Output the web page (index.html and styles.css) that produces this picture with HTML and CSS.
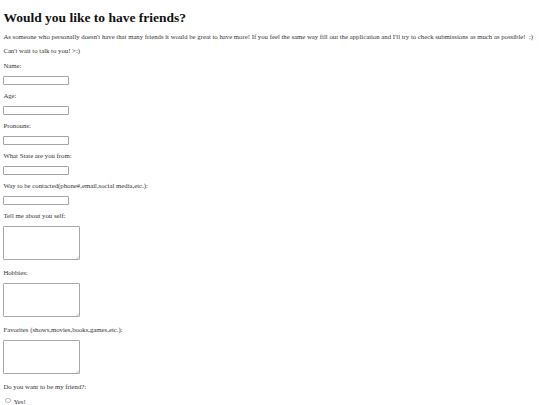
FILE: index.html
```html
<!DOCTYPE html>
<html lang="en">
<head>
<meta charset="utf-8">
<title>Would you like to have friends?</title>
<link rel="stylesheet" href="styles.css">
</head>
<body class="page">
<h1 class="title">Would you like to have friends?</h1>
<p class="text">As someone who personally doesn't have that many friends it would be great to have more! If you feel the same way fill out the application and I'll try to check submissions as much as possible! &nbsp;:)</p>
<p class="text">Can't wait to talk to you! &gt;:)</p>
<form class="form">
  <p class="text"><label for="name">Name:</label></p>
  <input class="field" type="text" id="name">
  <p class="text"><label for="age">Age:</label></p>
  <input class="field" type="text" id="age">
  <p class="text"><label for="pronouns">Pronouns:</label></p>
  <input class="field" type="text" id="pronouns">
  <p class="text"><label for="state">What State are you from:</label></p>
  <input class="field" type="text" id="state">
  <p class="text"><label for="contact">Way to be contacted(phone#,email,social media,etc.):</label></p>
  <input class="field" type="text" id="contact">
  <p class="text"><label for="about">Tell me about you self:</label></p>
  <div class="area-wrap"><textarea class="area" id="about"></textarea><svg class="grip" width="3" height="3" viewBox="0 0 3 3"><path d="M0.3 2.9 L2.9 0.3 M1.6 2.9 L2.9 1.6" stroke="#9a9a9a" stroke-width="0.45" fill="none"/></svg></div>
  <p class="text"><label for="hobbies">Hobbies:</label></p>
  <div class="area-wrap"><textarea class="area" id="hobbies"></textarea><svg class="grip" width="3" height="3" viewBox="0 0 3 3"><path d="M0.3 2.9 L2.9 0.3 M1.6 2.9 L2.9 1.6" stroke="#9a9a9a" stroke-width="0.45" fill="none"/></svg></div>
  <p class="text"><label for="favorites">Favorites (shows,movies,books,games,etc.):</label></p>
  <div class="area-wrap"><textarea class="area" id="favorites"></textarea><svg class="grip" width="3" height="3" viewBox="0 0 3 3"><path d="M0.3 2.9 L2.9 0.3 M1.6 2.9 L2.9 1.6" stroke="#9a9a9a" stroke-width="0.45" fill="none"/></svg></div>
  <p class="text">Do you want to be my friend?:</p>
  <div class="choice"><input class="radio" type="radio" id="yes" name="friend"> <label for="yes">Yes!</label></div>
</form>
</body>
</html>
```
FILE: styles.css
```css
.page {
  margin: 3.375px;
  font-family: "Liberation Serif", "Times New Roman", serif;
  font-size: 6.75px;
  line-height: 7.5px;
  color: #333;
  background: #fff;
}
.title {
  font-size: 13.5px;
  line-height: 15.5px;
  font-weight: bold;
  color: #111;
  margin: 7px 0;
}
.text {
  margin: 7px 0 6.5px;
  line-height: 7.5px;
}
.form {
  margin: 0;
}
.field {
  display: block;
  box-sizing: border-box;
  width: 66px;
  height: 9px;
  margin: 0;
  padding: 0;
  border: 1px solid #a4a4a4;
  border-radius: 1px;
  background: #fff;
  -webkit-appearance: none;
  appearance: none;
}
.area-wrap {
  position: relative;
  width: 76.4px;
  height: 34.4px;
  padding-bottom: 1.5px;
}
.area {
  display: block;
  box-sizing: border-box;
  width: 100%;
  height: 100%;
  margin: 0;
  padding: 0;
  border: 1px solid #a8a8a8;
  border-radius: 1px;
  resize: none;
  background: #fff;
}
.grip {
  position: absolute;
  right: 1px;
  bottom: 2.5px;
}
.choice {
  line-height: 7.5px;
}
.radio {
  -webkit-appearance: none;
  appearance: none;
  display: inline-block;
  box-sizing: border-box;
  width: 5.5px;
  height: 5.5px;
  margin: 1.27px 1.27px 0 2.1px;
  padding: 0;
  border: 1px solid #b5b5b5;
  border-radius: 50%;
  background: #fff;
  vertical-align: baseline;
}
```
